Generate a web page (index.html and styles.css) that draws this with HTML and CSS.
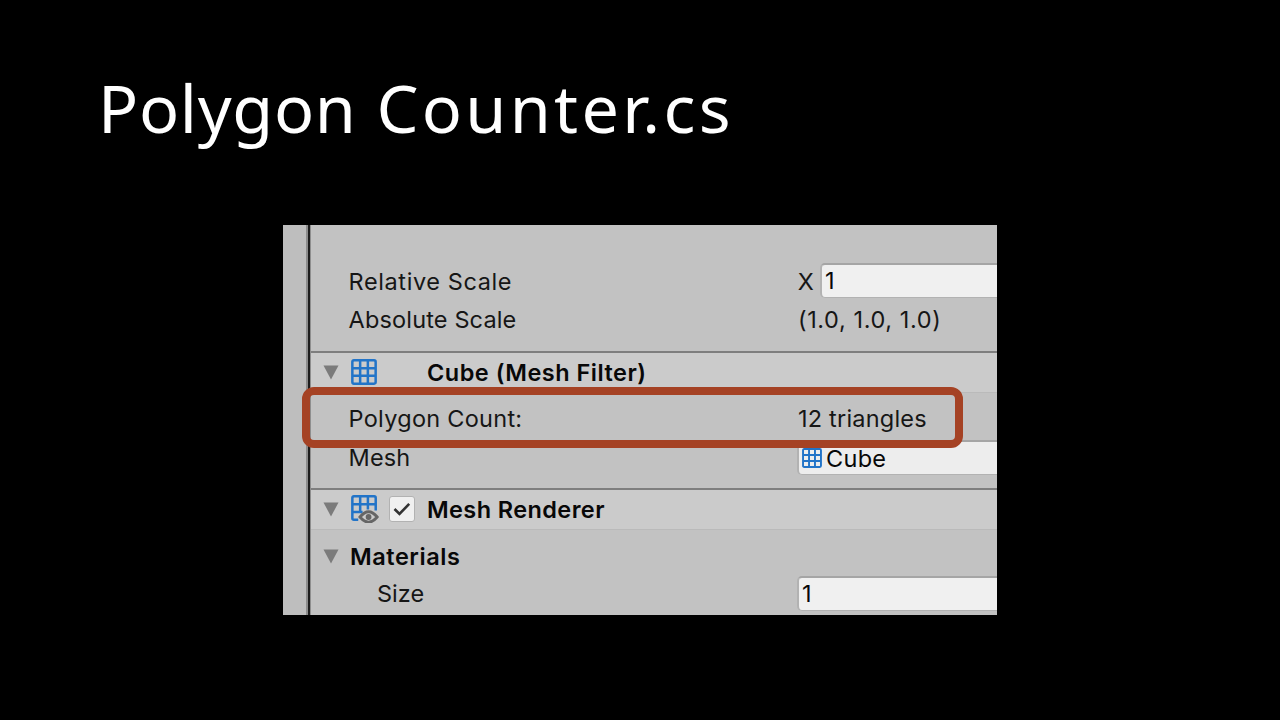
FILE: index.html
```html
<!DOCTYPE html>
<html lang="en">
<head>
<meta charset="utf-8">
<title>Polygon Counter.cs</title>
<link rel="stylesheet" href="styles.css">
</head>
<body>
<main class="slide">
  <h1 class="title"><span class="word-one">Polygon</span> <span class="word-two">Counter.cs</span></h1>
  <section class="shot">
    <div class="gutter"></div>
    <div class="inspector">
      <div class="row first"><span class="label rel">Relative Scale</span><span class="axis">X</span><span class="field scale">1</span></div>
      <div class="row second"><span class="label abs">Absolute Scale</span><span class="value tuple">(1.0, 1.0, 1.0)</span></div>
      <div class="header filter">
        <svg class="arrow" viewBox="0 0 16 15"><path d="M0.5 0.5H15.5L8 14.5Z"/></svg>
        <svg class="mesh" viewBox="0 0 27 27"><path d="M3 1.4H24Q25.6 1.4 25.6 3V24Q25.6 25.6 24 25.6H3Q1.4 25.6 1.4 24V3Q1.4 1.4 3 1.4ZM9.5 1.4V25.6M17.5 1.4V25.6M1.4 9.5H25.6M1.4 17.5H25.6"/></svg>
        <span class="name cube-name">Cube (Mesh Filter)</span>
      </div>
      <div class="row count"><span class="label poly">Polygon Count:</span><span class="value tri">12 triangles</span></div>
      <div class="row mesh-row"><span class="label mesh-label">Mesh</span><span class="field object"><svg class="mesh small" viewBox="0 0 27 27"><path d="M3 1.4H24Q25.6 1.4 25.6 3V24Q25.6 25.6 24 25.6H3Q1.4 25.6 1.4 24V3Q1.4 1.4 3 1.4ZM9.5 1.4V25.6M17.5 1.4V25.6M1.4 9.5H25.6M1.4 17.5H25.6"/></svg><span class="object-name">Cube</span></span></div>
      <div class="header renderer">
        <svg class="arrow" viewBox="0 0 16 15"><path d="M0.5 0.5H15.5L8 14.5Z"/></svg>
        <svg class="mesh eye" viewBox="0 0 29 29"><path d="M7.5 25.6H3Q1.4 25.6 1.4 24V3Q1.4 1.4 3 1.4H24Q25.6 1.4 25.6 3V16M9.5 1.4V19M17.5 1.4V15M1.4 9.5H25.6M1.4 17.5H12"/><path class="lid" d="M9.3 22.8Q18.2 12 27.1 22.8Q18.2 33.5 9.3 22.8Z"/><circle class="pupil" cx="18.2" cy="22.8" r="3"/></svg>
        <span class="check"><svg viewBox="0 0 18 14"><path d="M1.5 7L6.5 12L16.2 1.8"/></svg></span>
        <span class="name renderer-name">Mesh Renderer</span>
      </div>
      <div class="row materials"><svg class="arrow" viewBox="0 0 16 15"><path d="M0.5 0.5H15.5L8 14.5Z"/></svg><span class="name">Materials</span></div>
      <div class="row size"><span class="label indent">Size</span><span class="field">1</span></div>
    </div>
    <div class="highlight"></div>
  </section>
</main>
</body>
</html>
```
FILE: styles.css
```css
* { box-sizing: border-box; }
body { margin: 0; background: #000; }
.slide {
  width: 1280px;
  height: 720px;
  padding-top: 57px;
  overflow: hidden;
  background: #000;
}
.title {
  margin: 0 0 68px 98px;
  height: 100px;
  font: 400 66.5px/100px "Noto Sans", sans-serif;
  letter-spacing: 2.5px;
  color: #fff;
  white-space: nowrap;
}
.word-one { letter-spacing: 0.7px; }
.word-two { letter-spacing: 3.3px; }
.shot {
  position: relative;
  display: flex;
  width: 714px;
  height: 390px;
  margin-left: 283px;
  background: #c2c2c2;
}
.gutter {
  width: 28px;
  background: linear-gradient(90deg, #bebebe 0 23px, #8c8c8c 23px 25.5px, #1c1c1c 25.5px 27.5px, #8e8e8e 27.5px);
}
.inspector {
  flex: 1;
  min-width: 0;
  overflow: hidden;
  padding-top: 37px;
  font: 400 23.5px/38px Inter, sans-serif;
  letter-spacing: 0.6px;
  color: #161616;
  white-space: nowrap;
}
.row { display: flex; align-items: center; height: 38px; }
.second { height: 39px; margin-bottom: 12px; }
.label { width: 486px; padding-left: 37.6px; }
.rel { padding-top: 1px; }
.abs { letter-spacing: 0.15px; }
.poly { letter-spacing: 0.27px; }
.indent { padding-left: 66px; letter-spacing: 0; }
.axis { width: 23px; padding: 1px 0 0 0.7px; }
.value { padding-left: 1px; }
.tri { letter-spacing: 0.2px; }
.field {
  flex: 1;
  height: 35px;
  padding-left: 3px;
  border: solid #b2b2b2;
  border-width: 2px 0 1px 2px;
  border-top-color: #a5a5a5;
  border-radius: 5px 0 0 5px;
  background: #f0f0f0;
  line-height: 32px;
  color: #080808;
}
.size .field, .scale { margin-bottom: 1px; }
.header {
  display: flex;
  align-items: center;
  height: 42px;
  padding-left: 12px;
  border-top: 2px solid #7e7e7e;
  border-bottom: 1px solid #bababa;
  background: #cbcbcb;
}
.name { font-weight: 600; color: #080808; }
.arrow { display: block; width: 16px; height: 15px; fill: #7b7b7b; }
.mesh {
  width: 26px;
  height: 26px;
  margin: 0 1px 2px 12px;
  fill: none;
  stroke: #2274c8;
  stroke-width: 2.6;
}
.cube-name { margin-left: 49px; letter-spacing: 0.5px; }
.count { margin-top: 7px; }
.mesh-row { height: 39px; }
.mesh-label { padding-top: 1px; letter-spacing: 0.1px; }
.object {
  display: flex;
  align-items: center;
  background: #ededed;
}
.small { width: 20px; height: 20px; margin: 0 4px 0 0; }
.object-name { padding-top: 2px; letter-spacing: 0.3px; }
.renderer { margin-top: 11px; }
.eye { width: 28px; height: 28px; margin-bottom: 1px; }
.lid { fill: #cbcbcb; stroke: #666; stroke-width: 3; }
.pupil { fill: #666; stroke: none; }
.check {
  display: flex;
  align-items: center;
  justify-content: center;
  width: 26px;
  height: 26px;
  margin: 0 0 1px 9px;
  border: 1px solid #b2b2b2;
  border-radius: 3px;
  background: #f0f0f0;
}
.check svg { width: 18px; height: 14px; fill: none; stroke: #333; stroke-width: 2.6; }
.renderer-name { margin-left: 12px; padding-top: 1px; letter-spacing: 0.4px; }
.materials { margin-top: 7px; padding-left: 12px; }
.materials .name { margin-left: 11px; padding-top: 1px; letter-spacing: 0.55px; }
.highlight {
  position: absolute;
  left: 19px;
  top: 162px;
  width: 661px;
  height: 61px;
  border: 8px solid #a54224;
  border-radius: 12px;
}
```
